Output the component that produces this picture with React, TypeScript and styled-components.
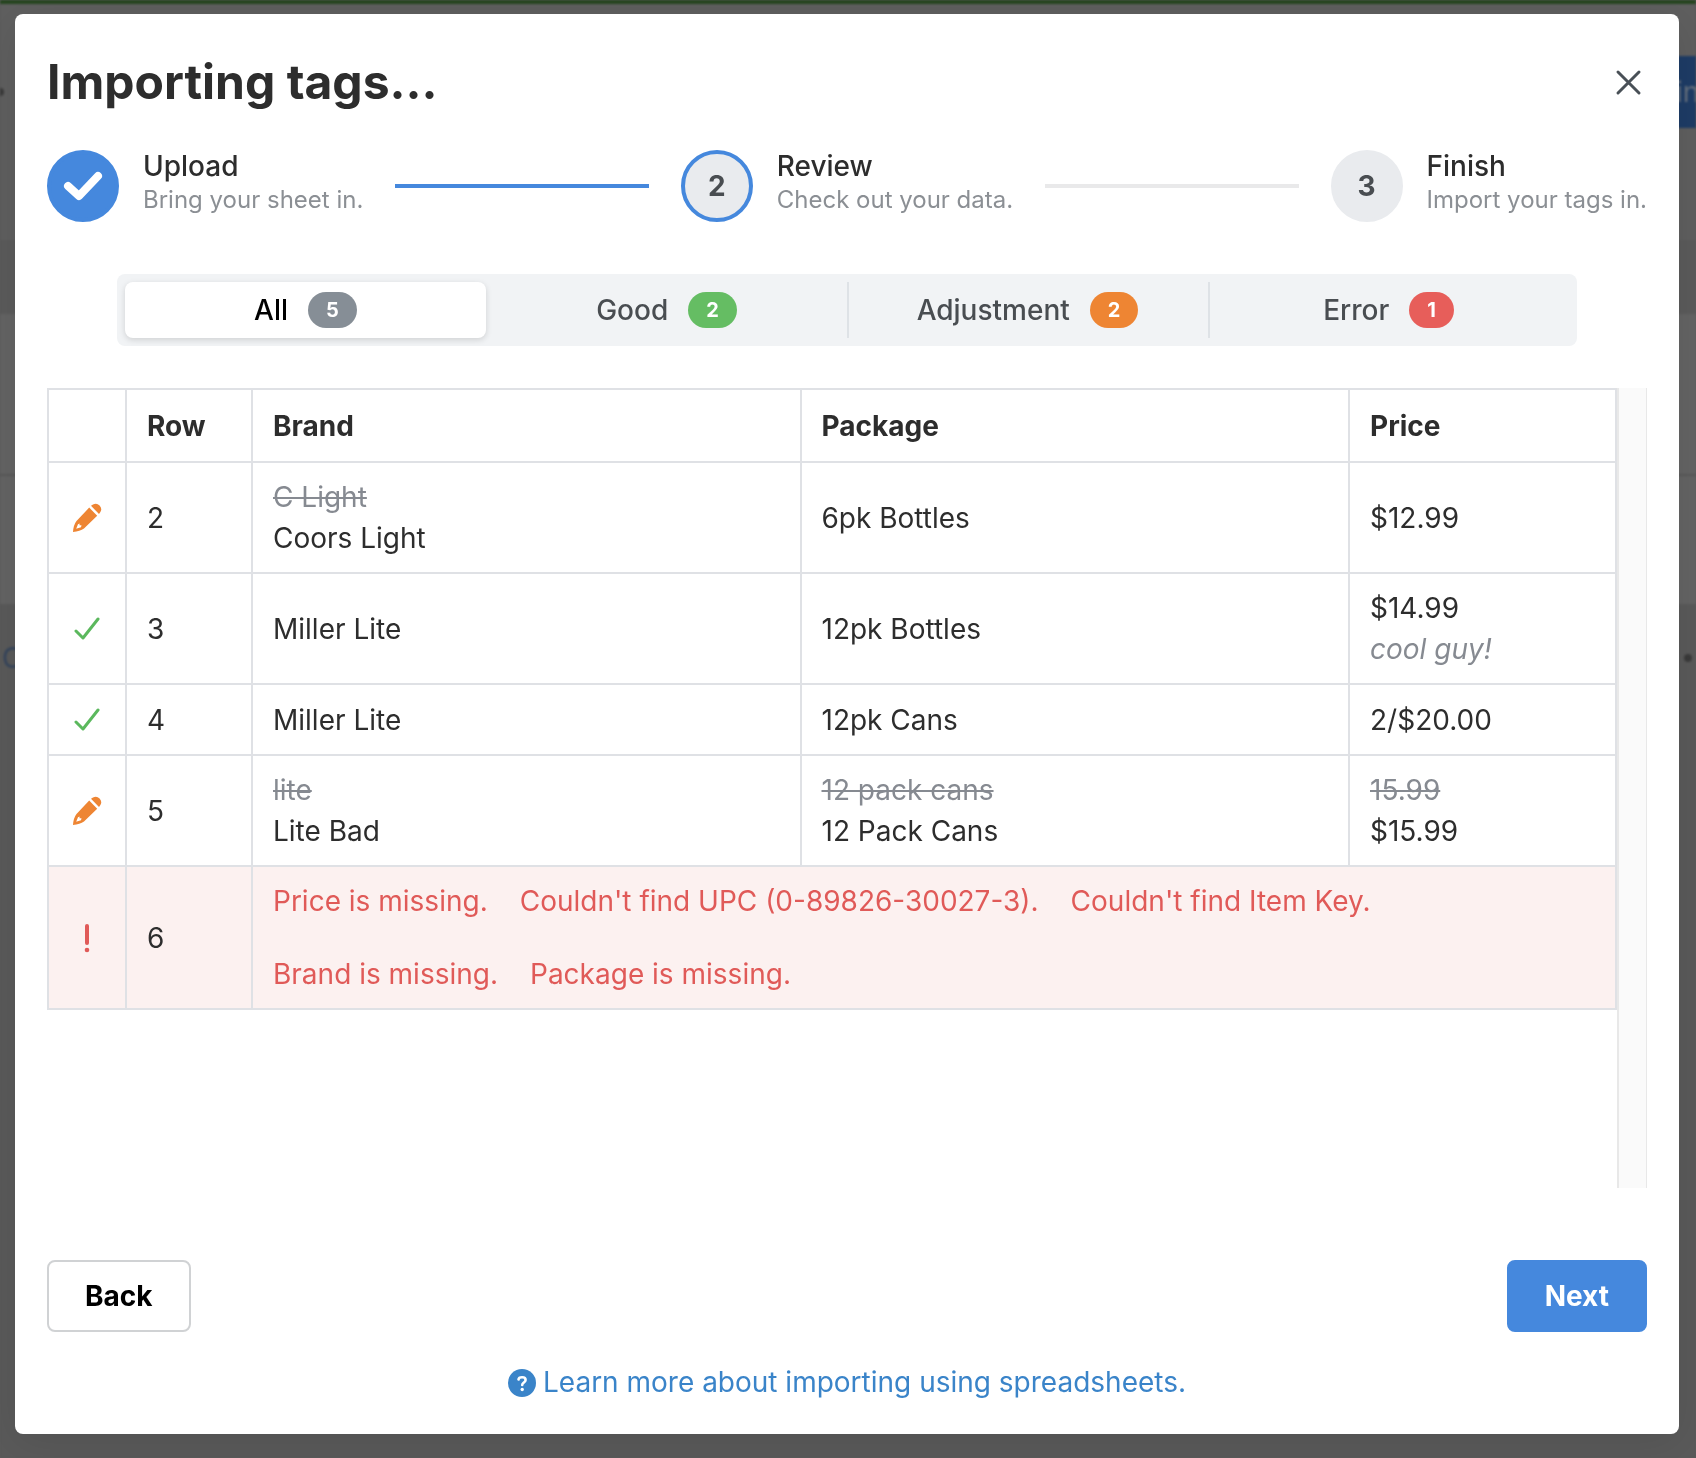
import React, { useState } from "react";
import styled, { createGlobalStyle, css } from "styled-components";

const GlobalStyle = createGlobalStyle`
  *, *::before, *::after { box-sizing: border-box; }
  body {
    margin: 0;
    background: #5a5a5a;
    color: #2d2d2d;
    font-family: Inter, "Liberation Sans", sans-serif;
    font-size: 28px;
    line-height: 41px;
  }
  button { font: inherit; cursor: pointer; }
  h1, p, ol { margin: 0; padding: 0; }
`;

/* Dimmed page behind the dialog */
const Page = styled.div`
  position: fixed;
  inset: 0;
  display: flex;
  flex-direction: column;
  overflow: hidden;
  background: #5a5a5a;
  filter: blur(1px);
`;
const TopBar = styled.div`
  height: 4px;
  flex: none;
  background: #25451f;
`;
const PageHeader = styled.div`
  display: flex;
  justify-content: space-between;
  align-items: center;
  height: 176px;
  flex: none;
  background: #5f5f5f;
`;
const PageAction = styled.div`
  width: 20px;
  height: 72px;
  line-height: 72px;
  background: #1e3c66;
  color: #66717f;
`;
const Dot = styled.div`
  width: 8px;
  height: 8px;
  margin: 0 4px 0 -4px;
  border-radius: 50%;
  background: #3a3a3a;
`;
const Band = styled.div<{ $h: number; $bg: string }>`
  display: flex;
  justify-content: space-between;
  align-items: center;
  height: ${(p) => p.$h}px;
  padding-left: 2px;
  flex: none;
  background: ${(p) => p.$bg};
  color: #34445c;
`;

const Overlay = styled.div`
  position: relative;
  min-height: 100vh;
  padding: 14px 17px 24px 15px;
  display: flex;
`;
const Modal = styled.div`
  flex: 1;
  min-width: 0;
  display: flex;
  flex-direction: column;
  padding: 40px 32px 31px;
  border-radius: 8px;
  background: #fff;
  box-shadow: 0 8px 40px rgba(0, 0, 0, 0.1);
`;
const Header = styled.header`
  display: flex;
  justify-content: space-between;
  align-items: center;
`;
const Title = styled.h1`
  font-size: 48px;
  line-height: 56px;
  font-weight: 700;
`;
const CloseButton = styled.button`
  display: flex;
  padding: 0;
  border: 0;
  background: none;
  color: #495057;
`;

const Steps = styled.ol`
  display: flex;
  align-items: center;
  gap: 32px;
  margin-top: 40px;
  list-style: none;
`;
const Step = styled.li`
  display: flex;
  align-items: center;
  gap: 24px;
`;
const Divider = styled.li<{ $done?: boolean }>`
  flex: 1;
  height: 4px;
  background: ${(p) => (p.$done ? "#4588dd" : "#e9e9ea")};
`;
type StepState = "done" | "active" | "todo";
const StepIcon = styled.span<{ $state: StepState }>`
  display: flex;
  align-items: center;
  justify-content: center;
  width: 72px;
  height: 72px;
  border-radius: 50%;
  border: 4px solid ${(p) => (p.$state === "todo" ? "#e9ebee" : "#4588dd")};
  background: ${(p) => (p.$state === "done" ? "#4588dd" : "#e9ebee")};
  color: ${(p) => (p.$state === "done" ? "#fff" : "#494d51")};
  font-weight: 700;
`;
const StepBody = styled.div`
  padding-bottom: 6px;
  line-height: 33px;
`;
const StepLabel = styled.span`
  display: block;
  font-weight: 500;
`;
const StepText = styled.span`
  display: block;
  font-size: 24px;
  color: #8b8f94;
`;

const Segments = styled.div`
  display: flex;
  margin: 52px 70px 0;
  padding: 8px;
  border-radius: 8px;
  background: #f1f3f5;
`;
const Segment = styled.button<{ $active: boolean; $line: boolean }>`
  flex: 1 1 0;
  display: flex;
  align-items: center;
  justify-content: center;
  gap: 20px;
  height: 56px;
  padding: 0;
  border: 0;
  font-weight: 500;
  color: #494d51;
  background: none;
  box-shadow: ${(p) => (p.$line ? "inset 2px 0 #dee2e6" : "none")};
  ${(p) =>
    p.$active &&
    css`
      color: #000;
      background: #fff;
      border-radius: 8px;
      box-shadow: 0 2px 6px rgba(0, 0, 0, 0.14);
    `}
`;
const Badge = styled.span<{ $color: string }>`
  height: 36px;
  padding: 0 18px;
  border-radius: 18px;
  background: ${(p) => p.$color};
  color: #fff;
  font-size: 20px;
  font-weight: 700;
  line-height: 36px;
`;

const ScrollArea = styled.div`
  display: flex;
  height: 800px;
  margin-top: 42px;
`;
const TableWrap = styled.div`
  flex: 1;
  min-width: 0;
`;
const Track = styled.div`
  flex: none;
  width: 30px;
  border: solid #e8e8e8;
  border-width: 0 1px 0 2px;
  background: #fafafa;
`;
const Table = styled.table`
  width: 100%;
  table-layout: fixed;
  border-collapse: collapse;
`;
const Col = styled.col<{ $w?: number }>`
  width: ${(p) => (p.$w ? `${p.$w}px` : "auto")};
`;
const cell = css`
  padding: 14px 20px 13px;
  border: 2px solid #dfe1e5;
  text-align: left;
  vertical-align: middle;
`;
const Th = styled.th`
  ${cell}
  height: 73px;
  font-weight: 700;
`;
const Td = styled.td`
  ${cell}
  height: 71px;
`;
const IconTd = styled(Td)`
  padding: 0;
  svg {
    display: block;
    margin: 0 auto;
  }
`;
const Row = styled.tr<{ $error?: boolean }>`
  background: ${(p) => (p.$error ? "#fcf1f0" : "#fff")};
`;
const Old = styled.del`
  display: block;
  color: #868a91;
`;
const Value = styled.span`
  display: block;
`;
const Note = styled.em`
  display: block;
  color: #868a91;
`;
const Errors = styled.div`
  display: flex;
  flex-wrap: wrap;
  gap: 32px;
  color: #e05a58;
`;

const Footer = styled.footer`
  display: flex;
  justify-content: space-between;
  margin-top: 72px;
`;
const Button = styled.button<{ $primary?: boolean }>`
  height: 72px;
  padding: 0 36px;
  border: 2px solid ${(p) => (p.$primary ? "#4588dd" : "#d0d2d4")};
  border-radius: 8px;
  background: ${(p) => (p.$primary ? "#4588dd" : "#fff")};
  color: ${(p) => (p.$primary ? "#fff" : "#000")};
  font-weight: 700;
`;
const HelpLink = styled.a`
  display: flex;
  align-items: center;
  align-self: center;
  gap: 7px;
  margin-top: 30px;
  color: #3a84c9;
  text-decoration: none;
`;

const CloseIcon = () => (
  <svg width="36" height="36" viewBox="0 0 36 36" fill="none" stroke="currentColor" strokeWidth="3" strokeLinecap="round">
    <path d="M7 8 28 29M28 8 7 29" />
  </svg>
);
const StepCheck = () => (
  <svg width="40" height="32" viewBox="0 0 40 32" fill="none" stroke="#fff" strokeWidth="8" strokeLinecap="round" strokeLinejoin="round">
    <path d="M5 16 16 26 35 6" />
  </svg>
);
const CheckIcon = () => (
  <svg width="26" height="24" viewBox="0 0 26 24" fill="none" stroke="#5bb85d" strokeWidth="3" strokeLinecap="round" strokeLinejoin="round">
    <path d="M2 14 9 21 24 2" />
  </svg>
);
const PencilIcon = () => (
  <svg width="30" height="30" viewBox="0 0 30 30" fill="#ee8533">
    <path d="M19 2.8 21 1.6Q24.500-.6 27.600 2.500 30.500 5.800 28.400 9L27 11Z" />
    <path fillRule="evenodd" d="M17.200 4.600 25.200 12.800 12 25.600Q8 28.400 1 29 1.400 22 4.500 18ZM6 21.200 4.200 25.800 9 24.300 9.500 22.300 7.500 22.200 7.600 20.500Z" />
  </svg>
);
const BangIcon = () => (
  <svg width="6" height="30" viewBox="0 0 6 30" fill="#e05a58">
    <rect x="1" y="1" width="4" height="21" rx="2" />
    <circle cx="3" cy="27" r="2.300" />
  </svg>
);
const HelpIcon = () => (
  <svg width="28" height="28" viewBox="0 0 28 28" fill="none">
    <circle cx="14" cy="14" r="14" fill="#3a84c9" />
    <path d="M10.500 10.500C10.800 7.600 17.600 7.200 17.600 11 17.600 13.500 14.200 13.600 14.200 16" stroke="#fff" strokeWidth="2.600" strokeLinecap="round" />
    <circle cx="14.200" cy="20.500" r="1.700" fill="#fff" />
  </svg>
);

const segments = [
  { label: "All", count: 5, color: "#868e96" },
  { label: "Good", count: 2, color: "#65bd63" },
  { label: "Adjustment", count: 2, color: "#ee8533" },
  { label: "Error", count: 1, color: "#e75e5a" },
];

type Cell = { value: string; old?: string; note?: string };
type Item = { row: number; kind: "edit" | "ok"; cells: Cell[] };
const items: Item[] = [
  { row: 2, kind: "edit", cells: [{ old: "C Light", value: "Coors Light" }, { value: "6pk Bottles" }, { value: "$12.99" }] },
  { row: 3, kind: "ok", cells: [{ value: "Miller Lite" }, { value: "12pk Bottles" }, { value: "$14.99", note: "cool guy!" }] },
  { row: 4, kind: "ok", cells: [{ value: "Miller Lite" }, { value: "12pk Cans" }, { value: "2/$20.00" }] },
  { row: 5, kind: "edit", cells: [{ old: "lite", value: "Lite Bad" }, { old: "12 pack cans", value: "12 Pack Cans" }, { old: "15.99", value: "$15.99" }] },
];
const errors = [
  "Price is missing.",
  "Couldn't find UPC (0-89826-30027-3).",
  "Couldn't find Item Key.",
  "Brand is missing.",
  "Package is missing.",
];

export default function App() {
  const [active, setActive] = useState("All");
  return (
    <>
      <GlobalStyle />
      <Page aria-hidden="true">
        <TopBar />
        <PageHeader>
          <Dot />
          <PageAction>in</PageAction>
        </PageHeader>
        <Band $h={60} $bg="#5f5f5f" />
        <Band $h={74} $bg="#5b5b5b" />
        <Band $h={160} $bg="#646464" />
        <Band $h={2} $bg="#585858" />
        <Band $h={128} $bg="#646464" />
        <Band $h={108} $bg="#5a5a5a">
          <span>C</span>
          <Dot />
        </Band>
      </Page>
      <Overlay>
        <Modal role="dialog" aria-labelledby="import-title">
          <Header>
            <Title id="import-title">Importing tags...</Title>
            <CloseButton aria-label="Close"><CloseIcon /></CloseButton>
          </Header>

          <Steps>
            <Step>
              <StepIcon $state="done"><StepCheck /></StepIcon>
              <StepBody>
                <StepLabel>Upload</StepLabel>
                <StepText>Bring your sheet in.</StepText>
              </StepBody>
            </Step>
            <Divider $done role="presentation" />
            <Step aria-current="step">
              <StepIcon $state="active">2</StepIcon>
              <StepBody>
                <StepLabel>Review</StepLabel>
                <StepText>Check out your data.</StepText>
              </StepBody>
            </Step>
            <Divider role="presentation" />
            <Step>
              <StepIcon $state="todo">3</StepIcon>
              <StepBody>
                <StepLabel>Finish</StepLabel>
                <StepText>Import your tags in.</StepText>
              </StepBody>
            </Step>
          </Steps>

          <Segments>
            {segments.map((s, i) => (
              <Segment
                key={s.label}
                $active={active === s.label}
                $line={i > 0 && active !== segments[i - 1].label}
                aria-pressed={active === s.label}
                onClick={() => setActive(s.label)}
              >
                {s.label}
                <Badge $color={s.color}>{s.count}</Badge>
              </Segment>
            ))}
          </Segments>

          <ScrollArea>
            <TableWrap>
              <Table>
                <colgroup>
                  <Col $w={78} />
                  <Col $w={126} />
                  <Col />
                  <Col />
                  <Col $w={267} />
                </colgroup>
                <thead>
                  <Row>
                    <Th aria-label="Status" />
                    <Th>Row</Th>
                    <Th>Brand</Th>
                    <Th>Package</Th>
                    <Th>Price</Th>
                  </Row>
                </thead>
                <tbody>
                  {items.map((item) => (
                    <Row key={item.row}>
                      <IconTd>{item.kind === "edit" ? <PencilIcon /> : <CheckIcon />}</IconTd>
                      <Td>{item.row}</Td>
                      {item.cells.map((c, i) => (
                        <Td key={i}>
                          {c.old && <Old>{c.old}</Old>}
                          <Value>{c.value}</Value>
                          {c.note && <Note>{c.note}</Note>}
                        </Td>
                      ))}
                    </Row>
                  ))}
                  <Row $error>
                    <IconTd><BangIcon /></IconTd>
                    <Td>6</Td>
                    <Td colSpan={3}>
                      <Errors>
                        {errors.map((e) => <span key={e}>{e}</span>)}
                      </Errors>
                    </Td>
                  </Row>
                </tbody>
              </Table>
            </TableWrap>
            <Track />
          </ScrollArea>

          <Footer>
            <Button>Back</Button>
            <Button $primary>Next</Button>
          </Footer>
          <HelpLink href="#help">
            <HelpIcon />
            Learn more about importing using spreadsheets.
          </HelpLink>
        </Modal>
      </Overlay>
    </>
  );
}
